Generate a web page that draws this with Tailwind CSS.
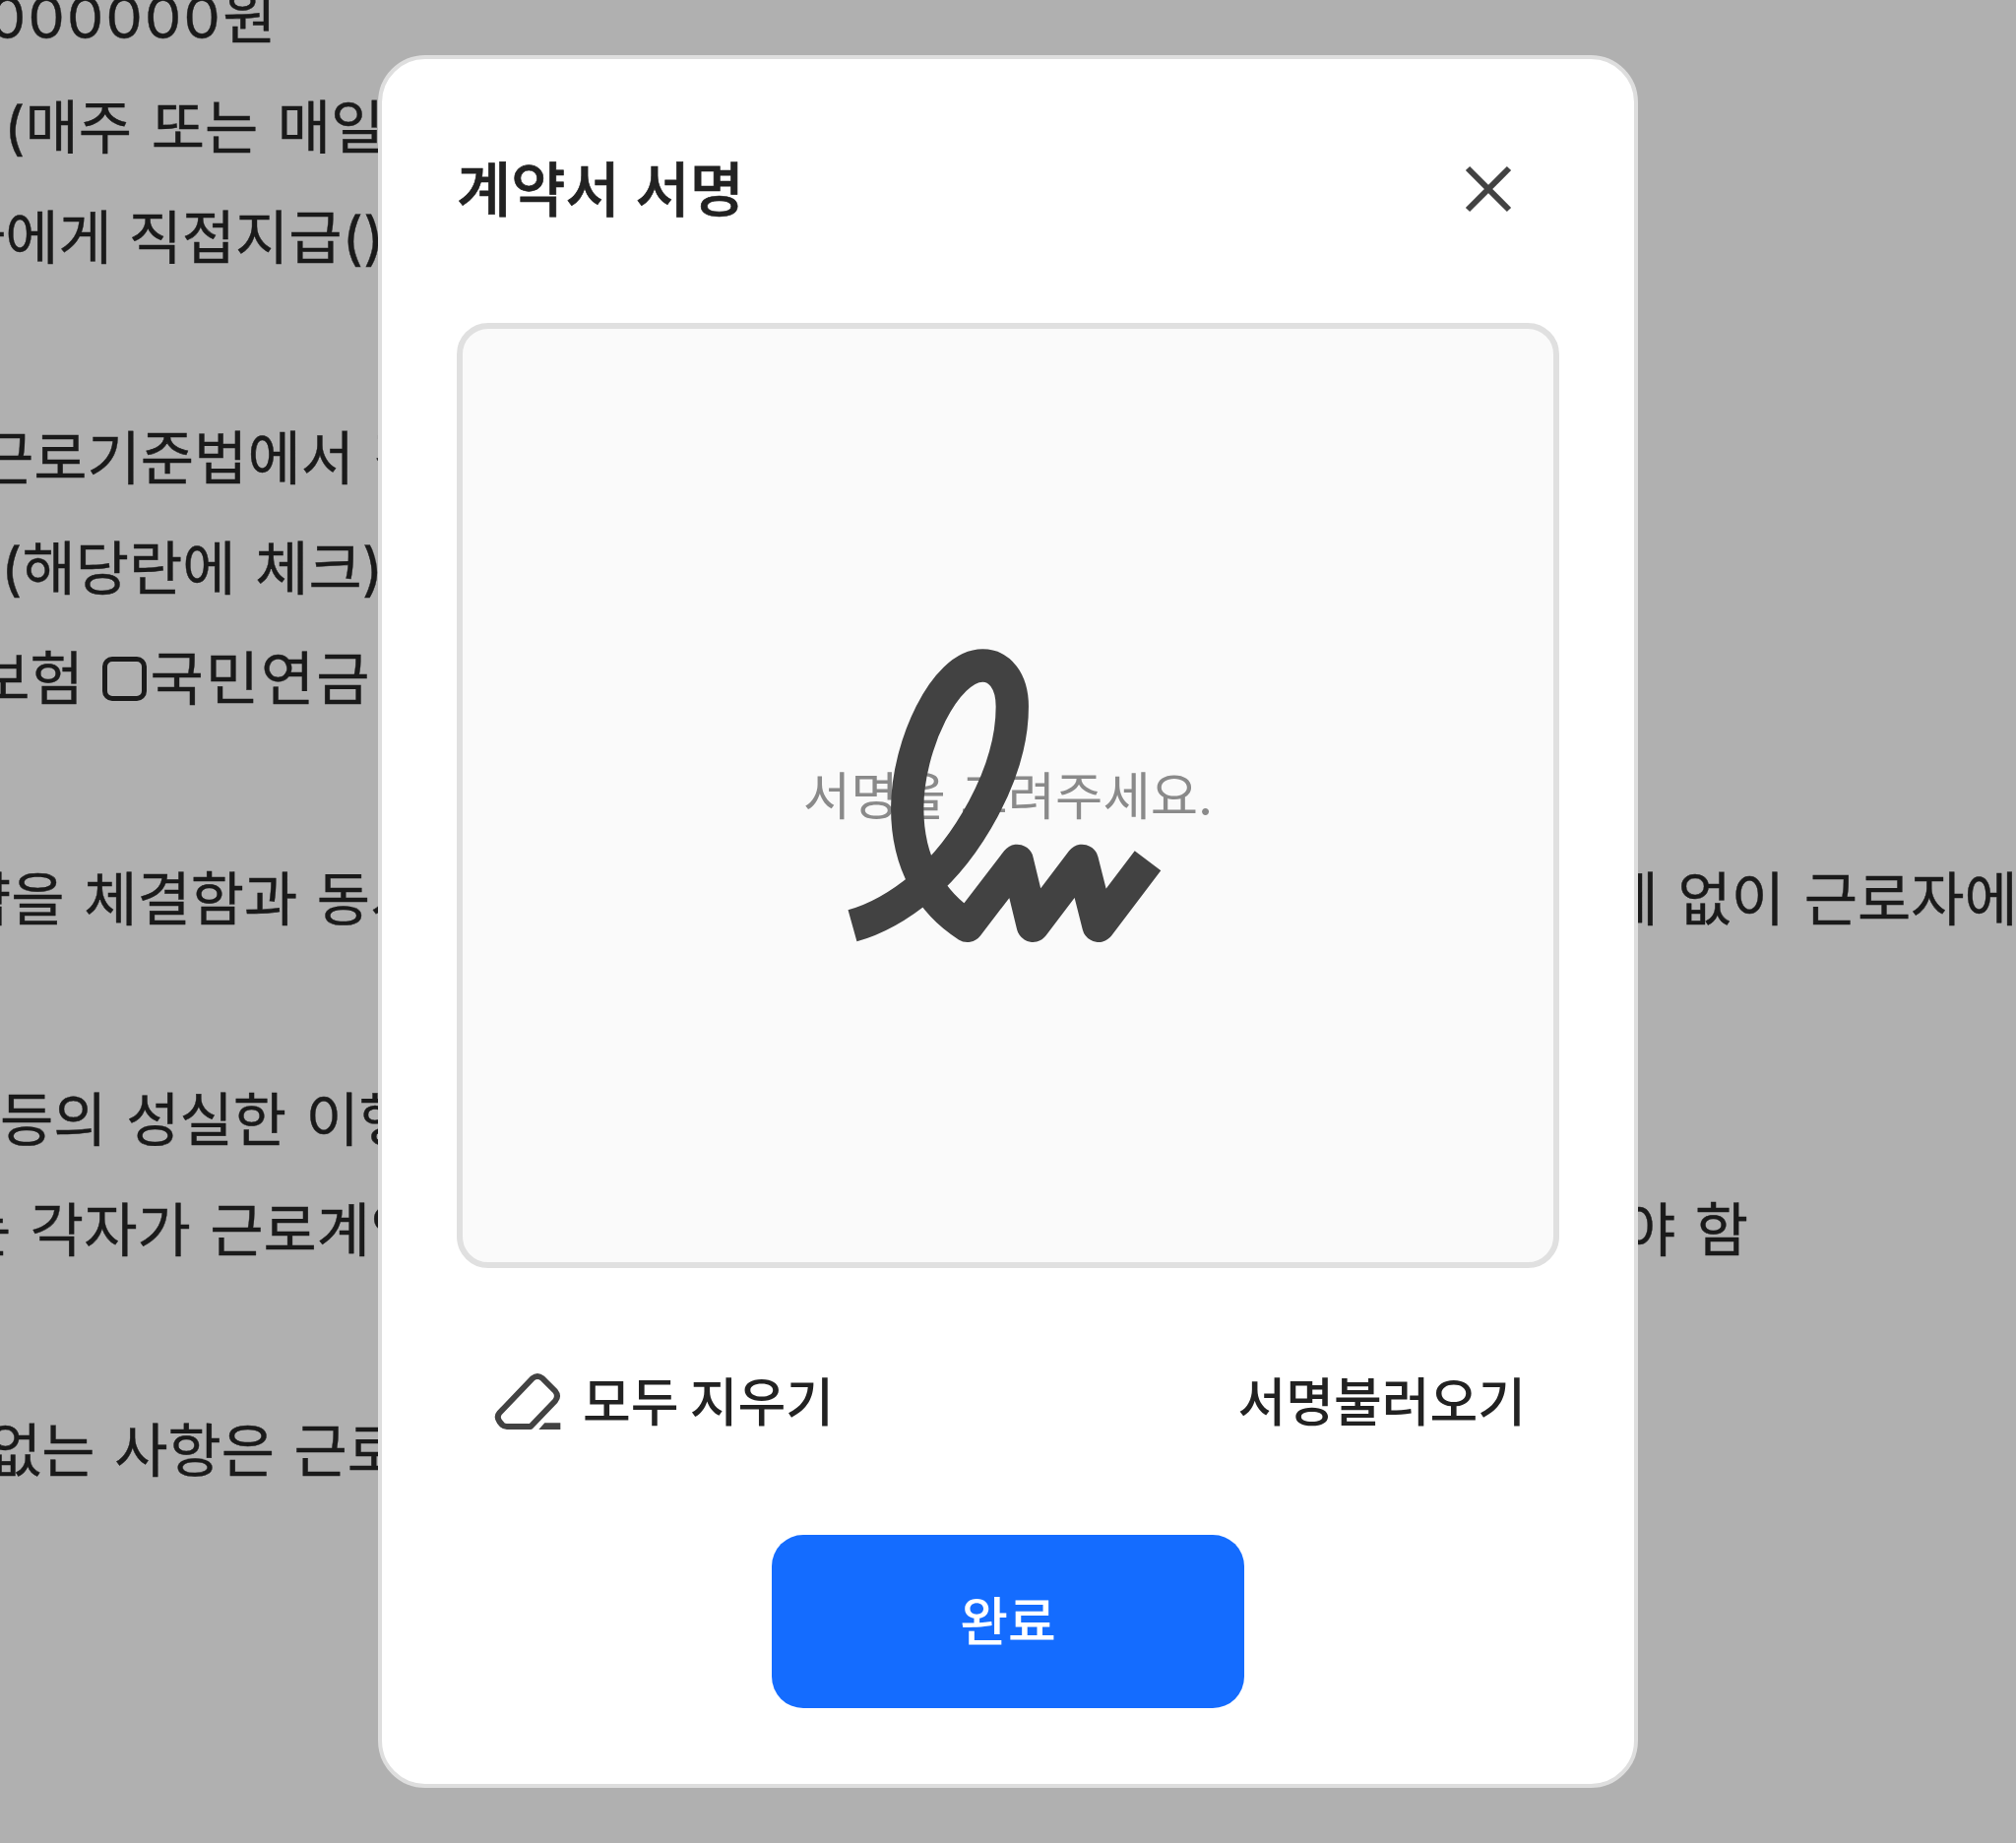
<!DOCTYPE html>
<html lang="ko">
  <head>
    <script src="https://cdn.jsdelivr.net/npm/@tailwindcss/browser@4"></script>
    <meta charset="UTF-8" />
    <title>계약서 서명</title>
  </head>
  <body class="bg-[#b0b0b0] font-['Inter','Noto_Sans_CJK_KR',sans-serif]">
    <div class="relative w-[2048px] h-[1872px] overflow-hidden">
      <!-- contract text behind the modal -->
      <div class="-mt-[38px] text-[59px] leading-[112px] text-[#1a1a1a] whitespace-nowrap [word-spacing:3px] [-webkit-text-stroke:0.4px_#1a1a1a]">
        <p class="h-[112px] ml-[-11px]"><span class="tracking-[2.3px]">000000</span>원</p>
        <p class="h-[112px] ml-[4px]">(매주 또는 매일 지급)</p>
        <p class="h-[112px] ml-[-49px] [word-spacing:0px]">자에게 직접지급(), 근로자 명의</p>
        <p class="h-[112px]"></p>
        <p class="h-[112px] ml-[-20px]">근로기준법에서 정하는 바에 따라</p>
        <p class="h-[112px] ml-[1px]">(해당란에 체크)</p>
        <p class="h-[112px] ml-[-78px]">재보험 <span class="inline-block align-[-1px] w-[45px] h-[45px] border-[5px] border-[#1a1a1a] rounded-[10px] mr-[3px]"></span><span class="tracking-[2px]">국민연금</span> □건강보험</p>
        <p class="h-[112px]"></p>
        <p class="h-[112px] ml-[-43px]">약을 체결함과 동시에 본 계약서를 사본하여 근로자의 <span class="ml-[-3px]">교부요구와</span> 관계 없이 근로자에게 교부함</p>
        <p class="h-[112px]"></p>
        <p class="h-[112px] ml-[0px]">등의 성실한 이행의무</p>
        <p class="h-[112px] ml-[-43px]">는 각자가 근로계약, 취업규칙, 단체협약을 지키고 성실하게 이행하여야 함</p>
        <p class="h-[112px]"></p>
        <p class="h-[112px] ml-[-12px]">없는 사항은 근로기준법령에 의함</p>
      </div>

      <!-- modal -->
      <div class="absolute left-[384px] top-[56px] w-[1280px] h-[1760px] bg-white border-4 border-[#dedede] rounded-[48px] px-[76px] pt-[97px] flex flex-col">
        <div class="h-[72px] mb-[99px] flex items-center justify-between">
          <h2 class="text-[60px] leading-[72px] font-medium text-[#222222] [-webkit-text-stroke:0.7px_#222222]">계약서 서명</h2>
          <button class="mr-[48px] -mt-[2px]">
            <svg class="block w-[48px] h-[48px]" viewBox="0 0 48 48" fill="none" stroke="#424242" stroke-width="6">
              <path d="M3 3L45 45M45 3L3 45" />
            </svg>
          </button>
        </div>

        <div class="relative h-[960px] bg-[#fafafa] border-[6px] border-[#e0e0e0] rounded-[32px] flex items-center justify-center">
          <span class="pt-[3px] text-[52.5px] text-[#8a8a8a]">서명을 그려주세요.</span>
          <svg class="absolute inset-0 m-auto w-[500px] h-[400px]" viewBox="14 7 500 400" fill="none" stroke="#424242" stroke-width="33.3" stroke-linejoin="round">
            <path d="M106 339.3C133.3 331.7 156.7 316.7 176.7 300C220 263.3 268.3 186.7 268.3 116.7C268.3 90 255 75 238.3 75C200 75 161.7 156.7 161.7 220C161.7 276.7 186.7 316.7 222.7 339.3L273.3 273.3L289.3 339.3L339.3 273.3L356 339.3L406 273.3" />
          </svg>
        </div>

        <div class="mt-[96px] h-[80px] pl-[38px] pr-[34px] flex items-center justify-between text-[53px] font-medium text-[#222222]">
          <button class="flex items-center gap-[18px]">
            <svg class="block w-[72px] h-[60px]" viewBox="42 52 72 60" fill="none" stroke="#424242" stroke-width="6">
              <path d="M81 58Q86 54 91 58L104 71Q108 76 104 81L79 107L55 107Q52 107 50 105L47.5 102Q44 97 47.5 93Z" stroke-linejoin="round" />
              <path d="M87.3 110L93.3 103.3L109.3 103.3L109.3 110Z" fill="#424242" stroke="none" />
            </svg>
            <span class="pt-[3px] [word-spacing:-3px]">모두 지우기</span>
          </button>
          <button class="pt-[3px]">서명불러오기</button>
        </div>

        <button class="mt-[95px] self-center w-[480px] h-[176px] pt-[3px] rounded-[32px] bg-[#146cff] text-white text-[53px] font-medium">완료</button>
      </div>
    </div>
  </body>
</html>
